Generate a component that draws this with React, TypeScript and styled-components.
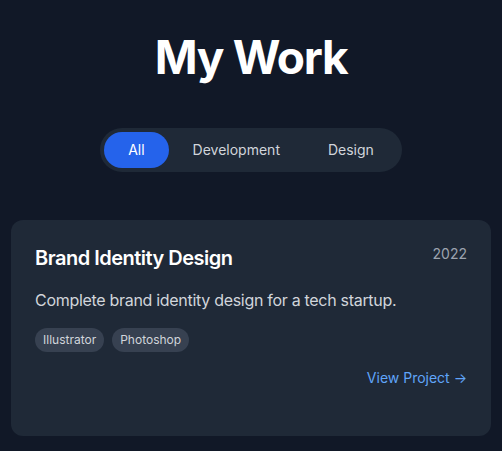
import React, { useState } from "react";
import styled, { createGlobalStyle } from "styled-components";

const Global = createGlobalStyle`
  html, body { margin: 0; padding: 0; background: #111827; }
  body { font-family: Inter, "Noto Sans", sans-serif; -webkit-font-smoothing: antialiased; }
  * { box-sizing: border-box; }
`;

const Page = styled.main`
  min-height: 451px;
  padding: 33px 11px 16px;
  display: flex;
  flex-direction: column;
  align-items: center;
`;

const Title = styled.h1`
  margin: 0 0 47px;
  font-size: 46px;
  line-height: 48px;
  font-weight: 700;
  color: #ffffff;
  letter-spacing: -1.3px;
`;

const Filters = styled.div`
  display: flex;
  padding: 4px;
  border-radius: 9999px;
  background: #1f2937;
  margin-bottom: 48px;
`;

const FilterButton = styled.button<{ $active: boolean }>`
  border: 0;
  cursor: pointer;
  font-family: inherit;
  font-size: 14px;
  line-height: 20px;
  padding: 8px 24px;
  border-radius: 9999px;
  background: ${(p) => (p.$active ? "#2563eb" : "transparent")};
  color: ${(p) => (p.$active ? "#ffffff" : "#d1d5db")};
`;

const Card = styled.article`
  width: 100%;
  background: #1f2937;
  border-radius: 12px;
  padding: 24px 24px 48px;
  display: flex;
  flex-direction: column;
`;

const CardHeader = styled.div`
  display: flex;
  justify-content: space-between;
  align-items: flex-start;
  margin-bottom: 16px;
`;

const CardTitle = styled.h2`
  margin: 0;
  font-size: 20px;
  line-height: 28px;
  font-weight: 600;
  color: #ffffff;
  letter-spacing: -0.5px;
`;

const Year = styled.span`
  font-size: 14px;
  line-height: 20px;
  color: #9ca3af;
`;

const Description = styled.p`
  margin: 0 0 16px;
  font-size: 16px;
  line-height: 24px;
  color: #d1d5db;
  letter-spacing: -0.3px;
`;

const Tags = styled.div`
  display: flex;
  gap: 8px;
  margin-bottom: 16px;
`;

const Tag = styled.span`
  font-size: 12px;
  line-height: 16px;
  padding: 4px 8px;
  border-radius: 9999px;
  background: #374151;
  color: #d1d5db;
`;

const Footer = styled.div`
  display: flex;
  justify-content: flex-end;
`;

const Link = styled.a`
  font-size: 14px;
  line-height: 20px;
  color: #60a5fa;
  text-decoration: none;
`;

const filters = ["All", "Development", "Design"];

export default function App() {
  const [active, setActive] = useState("All");
  return (
    <>
      <Global />
      <Page>
        <Title>My Work</Title>
        <Filters>
          {filters.map((f) => (
            <FilterButton key={f} $active={f === active} onClick={() => setActive(f)}>
              {f}
            </FilterButton>
          ))}
        </Filters>
        <Card>
          <CardHeader>
            <CardTitle>Brand Identity Design</CardTitle>
            <Year>2022</Year>
          </CardHeader>
          <Description>Complete brand identity design for a tech startup.</Description>
          <Tags>
            <Tag>Illustrator</Tag>
            <Tag>Photoshop</Tag>
          </Tags>
          <Footer>
            <Link href="#">View Project →</Link>
          </Footer>
        </Card>
      </Page>
    </>
  );
}
